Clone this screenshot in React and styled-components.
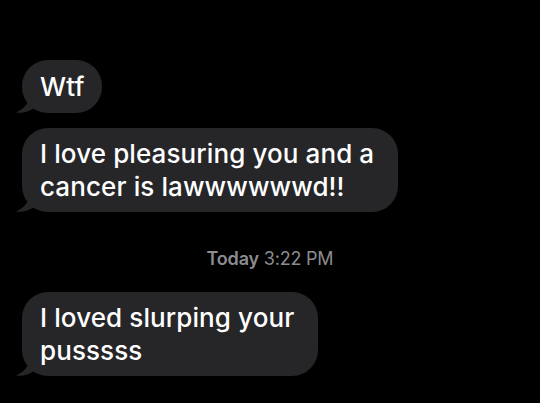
import React from 'react';
import styled, { createGlobalStyle } from 'styled-components';

const GlobalStyle = createGlobalStyle`
  html, body {
    margin: 0;
    padding: 0;
    background: #000;
  }
  body {
    font-family: Inter, "Liberation Sans", sans-serif;
    -webkit-font-smoothing: antialiased;
  }
`;

const Screen = styled.div`
  width: 540px;
  height: 403px;
  background: #000;
  overflow: hidden;
  display: flex;
  flex-direction: column;
  padding: 60px 0 0 22px;
  box-sizing: border-box;
`;

const Group = styled.div`
  display: flex;
  flex-direction: column;
  align-items: flex-start;
  gap: 15px;
`;

const BubbleWrap = styled.div`
  position: relative;
`;

const Bubble = styled.div`
  background: #262628;
  color: #fff;
  font-size: 26px;
  font-weight: 500;
  letter-spacing: 0.1px;
  line-height: 33px;
  padding: ${({ $single }) => ($single ? '10px 18px 10px 18px' : '9px 24px 9px 18px')};
  border-radius: 26px;
  box-sizing: border-box;
  white-space: nowrap;
`;

const Tail = styled.svg`
  position: absolute;
  left: -6px;
  bottom: 0;
  width: 22px;
  height: 20px;
`;

const Stamp = styled.div`
  align-self: center;
  margin: 36px 0 22px -22px;
  color: #8c8c91;
  font-size: 18px;
  line-height: 22px;
  letter-spacing: -0.2px;

  b {
    font-weight: 600;
  }
`;

const Message = ({ children, single }) => (
  <BubbleWrap>
    <Bubble $single={single}>{children}</Bubble>
    <Tail viewBox="0 0 22 20">
      <path
        d="M14 0 C14 8 10 15 0 19.5 C6 20.5 13 19 18 15 L22 12 L22 0 Z"
        fill="#262628"
      />
    </Tail>
  </BubbleWrap>
);

export default function App() {
  return (
    <>
      <GlobalStyle />
      <Screen>
        <Group>
          <Message single>Wtf</Message>
          <Message>
            I love pleasuring you and a
            <br />
            cancer is lawwwwwwd!!
          </Message>
        </Group>
        <Stamp>
          <b>Today</b> 3:22 PM
        </Stamp>
        <Group>
          <Message>
            I loved slurping your
            <br />
            pusssss
          </Message>
        </Group>
      </Screen>
    </>
  );
}
